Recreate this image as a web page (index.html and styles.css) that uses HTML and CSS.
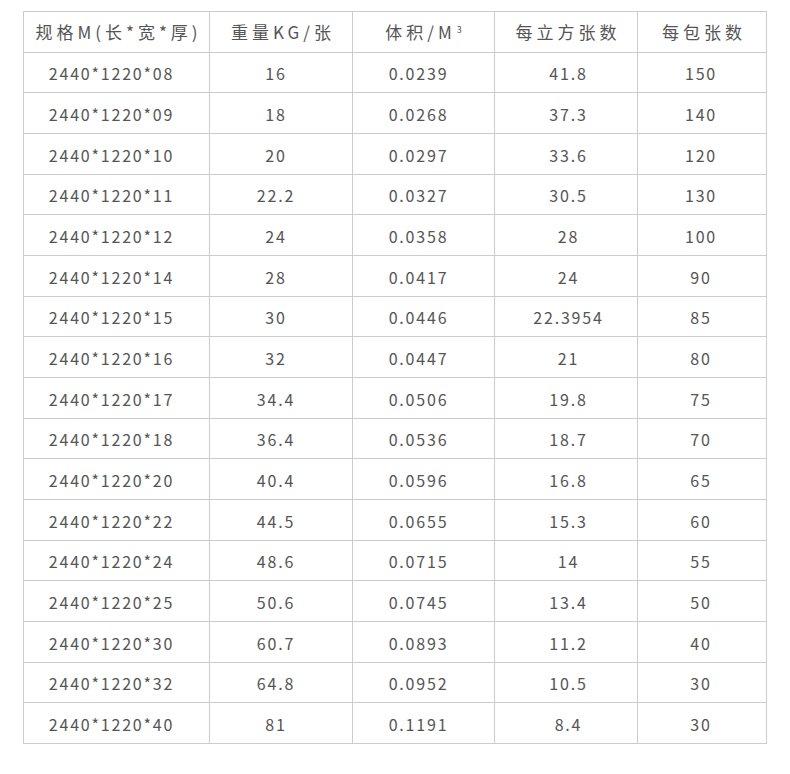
FILE: index.html
```html
<!DOCTYPE html>
<html lang="zh-CN">
<head>
<meta charset="utf-8">
<link rel="stylesheet" href="styles.css">
</head>
<body>
<table class="spec">
<colgroup>
<col class="c1"><col class="c2"><col class="c3"><col class="c4"><col class="c5">
</colgroup>
<thead>
<tr><th>规格M(长*宽*厚)</th><th>重量KG/张</th><th>体积/M<sup>3</sup></th><th>每立方张数</th><th>每包张数</th></tr>
</thead>
<tbody>
<tr><td>2440*1220*08</td><td>16</td><td>0.0239</td><td>41.8</td><td>150</td></tr>
<tr><td>2440*1220*09</td><td>18</td><td>0.0268</td><td>37.3</td><td>140</td></tr>
<tr><td>2440*1220*10</td><td>20</td><td>0.0297</td><td>33.6</td><td>120</td></tr>
<tr><td>2440*1220*11</td><td>22.2</td><td>0.0327</td><td>30.5</td><td>130</td></tr>
<tr><td>2440*1220*12</td><td>24</td><td>0.0358</td><td>28</td><td>100</td></tr>
<tr><td>2440*1220*14</td><td>28</td><td>0.0417</td><td>24</td><td>90</td></tr>
<tr><td>2440*1220*15</td><td>30</td><td>0.0446</td><td>22.3954</td><td>85</td></tr>
<tr><td>2440*1220*16</td><td>32</td><td>0.0447</td><td>21</td><td>80</td></tr>
<tr><td>2440*1220*17</td><td>34.4</td><td>0.0506</td><td>19.8</td><td>75</td></tr>
<tr><td>2440*1220*18</td><td>36.4</td><td>0.0536</td><td>18.7</td><td>70</td></tr>
<tr><td>2440*1220*20</td><td>40.4</td><td>0.0596</td><td>16.8</td><td>65</td></tr>
<tr><td>2440*1220*22</td><td>44.5</td><td>0.0655</td><td>15.3</td><td>60</td></tr>
<tr><td>2440*1220*24</td><td>48.6</td><td>0.0715</td><td>14</td><td>55</td></tr>
<tr><td>2440*1220*25</td><td>50.6</td><td>0.0745</td><td>13.4</td><td>50</td></tr>
<tr><td>2440*1220*30</td><td>60.7</td><td>0.0893</td><td>11.2</td><td>40</td></tr>
<tr><td>2440*1220*32</td><td>64.8</td><td>0.0952</td><td>10.5</td><td>30</td></tr>
<tr><td>2440*1220*40</td><td>81</td><td>0.1191</td><td>8.4</td><td>30</td></tr>
</tbody>
</table>
</body>
</html>
```
FILE: styles.css
```css
html, body {
  margin: 0;
  padding: 0;
  background: #ffffff;
}
body {
  padding: 11px 0 0 23px;
  font-family: "Noto Sans CJK SC", "Noto Sans", sans-serif;
  color: #555555;
}
.spec {
  border-collapse: collapse;
  table-layout: fixed;
  width: 743px;
}
.c1 { width: 186px; }
.c2 { width: 143px; }
.c3 { width: 142px; }
.c4 { width: 143px; }
.c5 { width: 129px; }
.spec th, .spec td {
  border: 1px solid #cccccc;
  height: 39.67px;
  padding: 0;
  text-align: center;
  vertical-align: middle;
  font-size: 16px;
  font-weight: 400;
  letter-spacing: 1.8px;
  line-height: 20px;
}
.spec td {
  height: 37.67px;
  padding-top: 2px;
}
.spec td:nth-child(1),
.spec td:nth-child(2),
.spec td:nth-child(3) {
  padding-right: 10px;
}
.spec td:nth-child(4) {
  padding-left: 5px;
}
.spec td:nth-child(5) {
  padding-right: 2px;
}
.spec th {
  font-size: 17px;
  letter-spacing: 4px;
  padding-left: 4px;
}
.spec sup {
  font-size: 9px;
  vertical-align: 6px;
  line-height: 0;
  margin-left: 1px;
}
```
